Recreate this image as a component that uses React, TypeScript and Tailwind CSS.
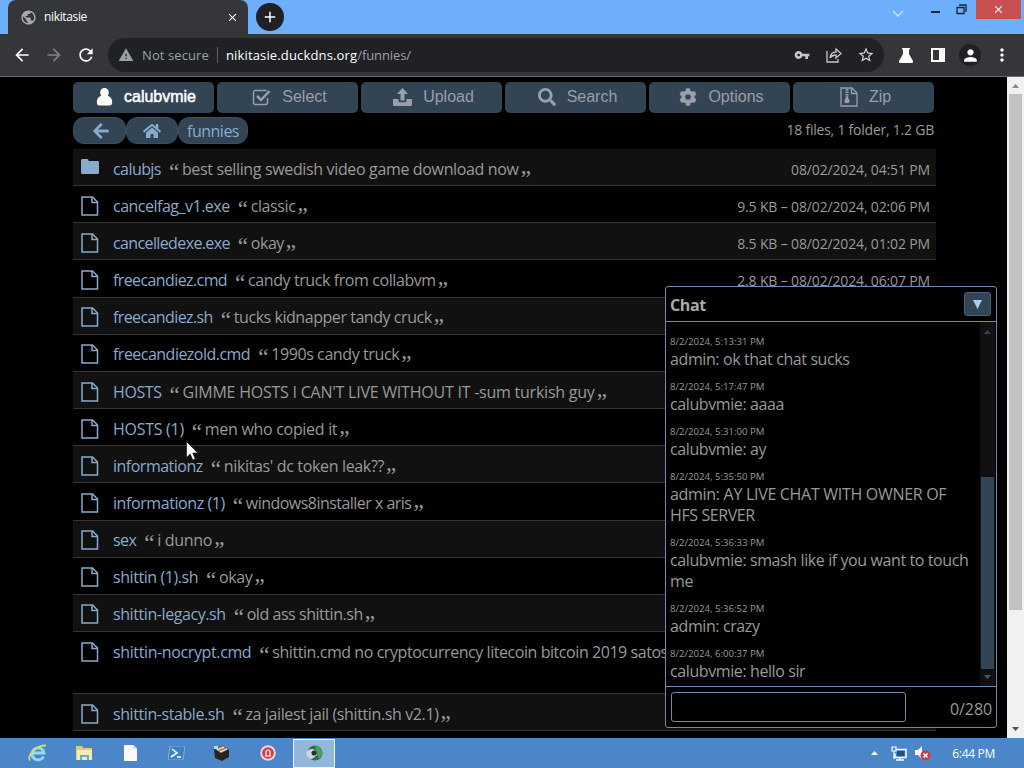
import type { ReactNode } from "react";
import { FaArrowLeft, FaCog, FaHome, FaSearch } from "react-icons/fa";
import {
  MdAdd,
  MdArrowBack,
  MdArrowForward,
  MdClose,
  MdMoreVert,
  MdPerson,
  MdPublic,
  MdRefresh,
  MdStarBorder,
  MdVpnKey,
  MdWarning,
} from "react-icons/md";

type Entry = {
  name: string;
  nameClass: string;
  comment: string;
  commentClass: string;
  meta?: string;
  folder?: boolean;
  tall?: boolean;
};

const entries: Entry[] = [
  { name: "calubjs", nameClass: "tracking-[-0.57px]", comment: "best selling swedish video game download now", commentClass: "tracking-[-0.35px]", meta: "08/02/2024, 04:51 PM", folder: true },
  { name: "cancelfag_v1.exe", nameClass: "tracking-[-0.5px]", comment: "classic", commentClass: "tracking-[-0.4px]", meta: "9.5 KB – 08/02/2024, 02:06 PM" },
  { name: "cancelledexe.exe", nameClass: "tracking-[-0.62px]", comment: "okay", commentClass: "tracking-[-0.5px]", meta: "8.5 KB – 08/02/2024, 01:02 PM" },
  { name: "freecandiez.cmd", nameClass: "tracking-[-0.6px]", comment: "candy truck from collabvm", commentClass: "tracking-[-0.41px]", meta: "2.8 KB – 08/02/2024, 06:07 PM" },
  { name: "freecandiez.sh", nameClass: "tracking-[-0.6px]", comment: "tucks kidnapper tandy cruck", commentClass: "tracking-[-0.45px]" },
  { name: "freecandiezold.cmd", nameClass: "tracking-[-0.52px]", comment: "1990s candy truck", commentClass: "tracking-[-0.4px]" },
  { name: "HOSTS", nameClass: "tracking-[-0.4px]", comment: "GIMME HOSTS I CAN'T LIVE WITHOUT IT -sum turkish guy", commentClass: "tracking-[-0.23px]" },
  { name: "HOSTS (1)", nameClass: "tracking-[-0.28px]", comment: "men who copied it", commentClass: "tracking-[-0.3px]" },
  { name: "informationz", nameClass: "tracking-[-0.5px]", comment: "nikitas' dc token leak??", commentClass: "tracking-[-0.35px]" },
  { name: "informationz (1)", nameClass: "tracking-[-0.42px]", comment: "windows8installer x aris", commentClass: "tracking-[-0.53px]" },
  { name: "sex", nameClass: "tracking-[-0.6px]", comment: "i dunno", commentClass: "tracking-[-0.3px]" },
  { name: "shittin (1).sh", nameClass: "tracking-[-0.43px]", comment: "okay", commentClass: "tracking-[-0.4px]" },
  { name: "shittin-legacy.sh", nameClass: "tracking-[-0.42px]", comment: "old ass shittin.sh", commentClass: "tracking-[-0.45px]" },
  { name: "shittin-nocrypt.cmd", nameClass: "tracking-[-0.38px]", comment: "shittin.cmd no cryptocurrency litecoin bitcoin 2019 satos", commentClass: "tracking-[-0.44px]", tall: true },
  { name: "shittin-stable.sh", nameClass: "tracking-[-0.42px]", comment: "za jailest jail (shittin.sh v2.1)", commentClass: "tracking-[-0.38px]" },
];

const messages = [
  { time: "8/2/2024, 5:13:31 PM", lines: ["admin: ok that chat sucks"] },
  { time: "8/2/2024, 5:17:47 PM", lines: ["calubvmie: aaaa"] },
  { time: "8/2/2024, 5:31:00 PM", lines: ["calubvmie: ay"] },
  { time: "8/2/2024, 5:35:50 PM", lines: ["admin: AY LIVE CHAT WITH OWNER OF", "HFS SERVER"] },
  { time: "8/2/2024, 5:36:33 PM", lines: ["calubvmie: smash like if you want to touch", "me"] },
  { time: "8/2/2024, 5:36:52 PM", lines: ["admin: crazy"] },
  { time: "8/2/2024, 6:00:37 PM", lines: ["calubvmie: hello sir"] },
];

function FileIcon() {
  return (
    <svg width="18" height="20" viewBox="0 0 18 20" fill="none" stroke="#88aacc" strokeWidth="1.5">
      <path d="M1 1h10.5L16.5 6v13H1z" />
      <path d="M11 1v5.5h5.5" />
    </svg>
  );
}

function FolderIcon() {
  return (
    <svg width="18" height="15" viewBox="0 0 19 15" preserveAspectRatio="none" fill="#88aacc">
      <path d="M0 1.5C0 .6.6 0 1.5 0h5C7.4 0 8 .6 8 1.5V2h9.5c.9 0 1.5.6 1.5 1.5v10c0 .9-.6 1.5-1.5 1.5h-16C.6 15 0 14.4 0 13.5z" />
    </svg>
  );
}

function UserIcon() {
  return (
    <svg width="17" height="18" viewBox="0 0 17 18" fill="#fff">
      <path d="M8.5 0C11 0 12.8 1.8 12.8 4.5c0 1.3-.4 2.300-1 3.200 2.800 1 4.400 3.200 4.400 6.300 0 2.300-1 3.600-2.600 3.600H3.400C1.800 17.600.8 16.300.8 14c0-3.100 1.600-5.300 4.400-6.300-.6-.9-1-1.900-1-3.200C4.200 1.800 6 0 8.500 0z" />
    </svg>
  );
}

function SelectIcon() {
  return (
    <svg width="19" height="18" viewBox="0 0 19 18" fill="none" stroke="#999fa6">
      <path d="M15.5 10v4.500a2 2 0 0 1-2 2h-10a2 2 0 0 1-2-2v-10a2 2 0 0 1 2-2h11" strokeWidth="1.5" />
      <path d="m5 8 4 4 8.5-9" strokeWidth="2.5" />
    </svg>
  );
}

function UploadIcon() {
  return (
    <svg width="19" height="18" viewBox="0 0 19 18" fill="#999fa6">
      <path d="M9.500 0 15 6h-3.500v6.500h-4V6H4z" />
      <path d="M0 11h5.500v1.500c0 1 .8 1.800 1.800 1.800h4.400c1 0 1.800-.8 1.800-1.800V11H19v5.500c0 .8-.7 1.500-1.500 1.500h-16C.7 18 0 17.300 0 16.500z" />
    </svg>
  );
}

function ZipIcon() {
  return (
    <svg width="18" height="20" viewBox="0 0 18 20" fill="none" stroke="#999fa6" strokeWidth="1.3">
      <path d="M1 1h11l5 5v13H1z" />
      <path d="M11.5 1v5.500H17" />
      <path d="M7 2v8" strokeWidth="3" strokeDasharray="1.5 1" />
      <path d="M7 9.500 5 14c-.4 2 4.400 2 4 0z" fill="#999fa6" />
    </svg>
  );
}

function ToolButton({ icon, label, active }: { icon: ReactNode; label: string; active?: boolean }) {
  return (
    <button
      className={
        active
          ? "flex h-[31px] w-[141px] items-center justify-center gap-[11px] rounded-[5px] bg-[#334455] pb-px pl-[5px] font-['Liberation_Sans',sans-serif] text-base text-white [-webkit-text-stroke:0.5px_#fff]"
          : "flex h-[31px] w-[141px] items-center justify-center gap-[11px] rounded-[5px] bg-[#334455] pb-px pl-1 font-['Liberation_Sans',sans-serif] text-base text-[#999fa6]"
      }
    >
      {icon}
      {label}
    </button>
  );
}

function Browser() {
  return (
    <header className="shrink-0">
      <div className="flex h-[34px] bg-[#6eaffb]">
        <div className="ml-2 flex w-60 items-center rounded-t-lg bg-[#35363a] pl-3 text-white">
          <MdPublic size={17} className="text-[#aaabae]" />
          <span className="ml-[7px] flex-1 text-xs font-medium tracking-[-0.35px]">nikitasie</span>
          <MdClose size={13} className="mr-[9px]" />
        </div>
        <div className="mt-[3px] ml-2 grid size-7 place-items-center rounded-full bg-[#202124] text-white">
          <MdAdd size={18} />
        </div>
        <div className="ml-auto flex h-[19px] items-center">
          <svg width="12" height="8" viewBox="0 0 12 8" className="mt-2 mr-[27px]" fill="none" stroke="#c8e2ff" strokeWidth="1.5">
            <path d="m1 1 5 5 5-5" />
          </svg>
          <div className="mt-[5px] mr-4 h-[2px] w-[9px] bg-[#10253e]" />
          <svg width="11" height="11" viewBox="0 0 11 11" className="mr-[9px]" fill="none" stroke="#10253e" strokeWidth="1.3">
            <path d="M1 3.500h7v6H1zM3 1h7v7" />
          </svg>
          <div className="mr-[3px] grid h-[19px] w-[45px] place-items-center bg-[#c75050] text-white">
            <MdClose size={13} />
          </div>
        </div>
      </div>
      <div className="flex h-[43px] items-center border-b border-[#6b6c70] bg-[#35363a] pl-3 text-white">
        <MdArrowBack size={20} />
        <MdArrowForward size={20} className="ml-3 text-[#808184]" />
        <MdRefresh size={20} className="ml-3" />
        <div className="ml-3 flex h-[34px] w-[776px] items-center rounded-full bg-[#202124] pl-2.5 text-[13px]">
          <MdWarning size={16} className="text-[#9aa0a6]" />
          <span className="ml-2 pt-px tracking-[0.1px] text-[#9aa0a6]">Not secure</span>
          <span className="mx-[8px] h-4 w-px bg-[#5f6368]" />
          <span className="pt-px tracking-[0.15px]">
            nikitasie.duckdns.org<span className="tracking-[-0.1px] text-[#9aa0a6]">/funnies/</span>
          </span>
          <MdVpnKey size={16} className="ml-auto text-[#c4c7ca]" />
          <svg width="16" height="16" viewBox="0 0 16 16" className="ml-4 text-[#c4c7ca]" fill="none" stroke="currentColor" strokeWidth="1.3">
            <path d="M1 4v11h11v-3" />
            <path d="M4 11c.5-4 2.500-6 6-6V2l5 4.500-5 4.500V8c-2.500 0-4.500.8-6 3z" />
          </svg>
          <MdStarBorder size={18} className="mr-[9px] ml-[15px] text-[#d4d6d8]" />
        </div>
        <svg width="14" height="15" viewBox="0 0 14 15" className="ml-[15px]" fill="#fff">
          <path d="M3 0h8v1.500h-1V6l4 7c.4 1-.1 2-1.200 2H1.200C.1 15-.4 14 0 13l4-7V1.500H3z" />
        </svg>
        <svg width="14" height="14" viewBox="0 0 14 14" className="ml-[18px]">
          <path d="M0 0h14v14H0zM2 2v10h6V2z" fill="#fff" fillRule="evenodd" />
        </svg>
        <div className="ml-[14px] grid size-[22px] place-items-center rounded-full bg-[#202124]">
          <MdPerson size={19} />
        </div>
        <MdMoreVert size={20} className="ml-[11px]" />
      </div>
    </header>
  );
}

function Chat() {
  return (
    <section className="absolute top-[209px] left-[665px] flex h-[442px] w-[332px] flex-col rounded-[3px] border border-[#7788aa] bg-black text-[#999]">
      <div className="flex h-[35px] shrink-0 items-center justify-between border-b border-[#7788aa] pr-[5px] pl-1">
        <h2 className="pt-0.5 text-base font-bold tracking-[-0.4px] text-[#aaa]">Chat</h2>
        <button className="grid h-6 w-[27px] place-items-center rounded-[3px] border border-[#48607a] bg-[#334455]">
          <svg width="9" height="9" viewBox="0 0 9 9" fill="#aaccee">
            <path d="M0 0h9L4.500 9z" />
          </svg>
        </button>
      </div>
      <div className="flex min-h-0 flex-1">
        <div className="flex min-w-0 flex-1 flex-col gap-2.5 pt-[13px] pl-1">
          {messages.map((m) => (
            <div key={m.time}>
              <div className="h-[14px] text-[9.6px] leading-[14px]">{m.time}</div>
              {m.lines.map((line) => (
                <div
                  key={line}
                  className={
                    line.includes("LIVE")
                      ? "h-[21px] text-base leading-[21px] tracking-[-0.3px] whitespace-nowrap"
                      : "h-[21px] text-base leading-[21px] tracking-[-0.4px] whitespace-nowrap"
                  }
                >
                  {line}
                </div>
              ))}
            </div>
          ))}
        </div>
        <div className="mr-px flex w-[15px] shrink-0 flex-col items-center bg-[#111]">
          <svg width="7" height="4" viewBox="0 0 7 4" className="mt-2" fill="#334455">
            <path d="M0 4 3.500 0 7 4z" />
          </svg>
          <div className="mt-[143px] h-[192px] w-[13px] shrink-0 bg-[#334455]" />
          <svg width="7" height="4" viewBox="0 0 7 4" className="mt-1.5" fill="#445566">
            <path d="M0 0h7L3.500 4z" />
          </svg>
        </div>
      </div>
      <div className="flex h-[41px] shrink-0 items-center justify-between border-t border-[#7788aa] px-1">
        <div className="ml-px h-[30px] w-[235px] rounded-[3px] border border-[#7788aa]" />
        <span className="pt-[3px] text-base tracking-[-0.1px]">0/280</span>
      </div>
    </section>
  );
}

function Row({ entry }: { entry: Entry }) {
  return (
    <li
      className={
        entry.tall
          ? "flex h-[62px] border-b border-[#333] pt-[8.6px]"
          : "flex h-[37.17px] border-b border-[#333] pt-[8.6px] odd:bg-[#111]"
      }
    >
      <span className="w-10 shrink-0 pt-px pl-2">{entry.folder ? <FolderIcon /> : <FileIcon />}</span>
      <span className={`text-base leading-[23px] whitespace-nowrap text-[#88aacc] ${entry.nameClass}`}>{entry.name}</span>
      <span className={`ml-2 text-base leading-[23px] whitespace-nowrap text-[#999] ${entry.commentClass}`}>
        <span className="mr-[2px] inline-block w-[11px] align-[-5px] font-['Liberation_Serif',serif] text-[23px] leading-[0] tracking-normal">“</span>
        {entry.comment}
        {!entry.tall && (
          <span className="ml-[2px] inline-block w-[11px] align-[-11px] font-['Liberation_Serif',serif] text-[23px] leading-[0] tracking-normal">”</span>
        )}
      </span>
      {entry.meta && (
        <span className="mr-1.5 ml-auto text-[14px] leading-6 tracking-[-0.15px] whitespace-nowrap text-[#999]">{entry.meta}</span>
      )}
    </li>
  );
}

function Listing() {
  return (
    <main className="relative flex h-[661px] shrink-0 overflow-hidden bg-black">
      <div className="ml-[73px] w-[863px] pt-[5px]">
        <nav className="flex gap-[3px]">
          <ToolButton active icon={<UserIcon />} label="calubvmie" />
          <ToolButton icon={<SelectIcon />} label="Select" />
          <ToolButton icon={<UploadIcon />} label="Upload" />
          <ToolButton icon={<FaSearch size={18} />} label="Search" />
          <ToolButton icon={<FaCog size={18} />} label="Options" />
          <ToolButton icon={<ZipIcon />} label="Zip" />
        </nav>
        <div className="mt-1 flex h-[27px] items-center">
          <span className="grid h-[27px] w-[53px] place-items-center rounded-[11px] border border-[#3c4e60] bg-[#334455] pl-0.5 text-[#88aacc]">
            <FaArrowLeft size={18} />
          </span>
          <span className="grid h-[27px] w-[52px] place-items-center rounded-[11px] border border-[#3c4e60] bg-[#334455] text-[#88aacc]">
            <FaHome size={18} />
          </span>
          <span className="grid h-[27px] w-[70px] place-items-center rounded-[11px] border border-[#3c4e60] bg-[#334455] pt-px text-base leading-6 tracking-[-0.5px] text-[#88aacc]">
            funnies
          </span>
          <span className="mr-0.5 ml-auto pb-0.5 text-[14px] tracking-[-0.23px] text-[#999]">18 files, 1 folder, 1.2 GB</span>
        </div>
        <ul className="mt-[5px]">
          {entries.map((entry) => (
            <Row key={entry.name} entry={entry} />
          ))}
        </ul>
      </div>
      <div className="ml-auto flex w-[17px] flex-col items-center bg-[#f1f1f1]">
        <svg width="7" height="4" viewBox="0 0 7 4" className="mt-[7px]" fill="#8a8a8a">
          <path d="M0 4 3.500 0 7 4z" />
        </svg>
        <div className="mt-1.5 h-[516px] w-[13px] bg-[#c1c1c1]" />
        <svg width="7" height="4" viewBox="0 0 7 4" className="mt-auto mb-[7px]" fill="#505050">
          <path d="M0 0h7L3.500 4z" />
        </svg>
      </div>
      <Chat />
      <svg width="13" height="20" viewBox="0 0 13 20" className="absolute top-[364px] left-[186px]">
        <path d="M.5.5v16l3.700-3.500 2.500 6 2.600-1-2.500-6h5z" fill="#fff" stroke="#000" strokeWidth=".6" />
      </svg>
    </main>
  );
}

function Taskbar() {
  return (
    <footer className="flex h-[30px] shrink-0 items-center bg-[#4a86c8]">
      <svg width="20" height="18" viewBox="0 0 20 18" className="ml-7" fill="none">
        <path d="M15.500 12.500A6 6 0 1 1 16 9H5" stroke="#8fdcfb" strokeWidth="2.8" />
        <path d="M2 16.500C-1 12 8 1 18 1.500" stroke="#dcdc5c" strokeWidth="1.8" />
      </svg>
      <svg width="17" height="16" viewBox="0 0 17 16" className="ml-[28px]">
        <path d="M0 1h6l1.500 2H16v12H0z" fill="#e3c97a" />
        <path d="M1 5h15v10H1z" fill="#f7e9b4" />
        <path d="M4 15v-5h9v5h-2v-3H6v3z" fill="#6aaec9" />
      </svg>
      <svg width="13" height="16" viewBox="0 0 13 16" className="ml-[31px]">
        <path d="M0 0h9.500L13 3.500V16H0z" fill="#f8fafc" />
        <path d="M9.500 0v3.500H13" fill="#c8d4e0" />
      </svg>
      <svg width="17" height="14" viewBox="0 0 17 14" className="ml-[31px]">
        <path d="M2 0h15l-2 14H0z" fill="#3f82c0" stroke="#8dbbe3" strokeWidth=".8" />
        <path d="m4 3 5 4-6 4M9 11h4" fill="none" stroke="#fff" strokeWidth="1.6" />
      </svg>
      <svg width="15" height="16" viewBox="0 0 15 16" className="ml-[29px]">
        <path d="M0 4 8 1l7 4v7l-7 4-7-3z" fill="#29241f" />
        <path d="m1 4 7-3 6 3.500L7 8z" fill="#bb8550" />
        <path d="m3 5 7-3M6 7l7-3" stroke="#fff" />
        <path d="M0 1h4v3H0z" fill="#a7e0f5" />
      </svg>
      <svg width="16" height="16" viewBox="0 0 16 16" className="ml-[31px]">
        <circle cx="8" cy="8" r="7.8" fill="#e9d4d8" />
        <circle cx="8" cy="8" r="5.8" fill="#d33b42" />
        <path d="M6 11V7a2 2 0 0 1 4 0v4M5 11h6" fill="none" stroke="#fff" strokeWidth="1.2" />
      </svg>
      <div className="ml-[17px] grid h-[29px] w-[42px] place-items-center border border-white/90 bg-[#93b7db]">
        <svg width="17" height="16" viewBox="0 0 17 16">
          <circle cx="9" cy="8" r="7.5" fill="#3c6559" />
          <path d="M9 .5a7.500 7.500 0 0 1 4 13.500L11 8z" fill="#4da25a" />
          <path d="M0 8c2-4 6-5 9-3l2 5-5 4c-3 0-5-2-6-6z" fill="#cbd7df" />
          <circle cx="8" cy="8" r="2.5" fill="#1d3241" />
        </svg>
      </div>
      <svg width="7" height="4" viewBox="0 0 7 4" className="ml-auto" fill="#fff">
        <path d="M0 4 3.500 0 7 4z" />
      </svg>
      <svg width="16" height="15" viewBox="0 0 16 15" className="ml-[13px]" fill="none">
        <path d="M5 3.500h10v8H4v-4M9 11v3M5 14h8" stroke="#fff" strokeWidth="1.5" />
        <path d="M1 1h4v4H1zM3 5v8" stroke="#fff" strokeWidth="1.2" />
        <path d="M6 5h7.500v5H6z" fill="#244e7c" />
      </svg>
      <svg width="17" height="16" viewBox="0 0 17 16" className="ml-[7px]">
        <path d="M1 5h3l4-4v13l-4-4H1z" fill="#fff" />
        <circle cx="11.5" cy="10.5" r="5" fill="#cf3b40" />
        <path d="m9.500 8.500 4 4m0-4-4 4" stroke="#fff" strokeWidth="1.5" />
      </svg>
      <span className="mr-[29px] ml-[21px] pt-px text-xs tracking-[-0.3px] text-white">6:44 PM</span>
    </footer>
  );
}

export default function App() {
  return (
    <div className="flex h-[768px] w-[1024px] flex-col overflow-hidden bg-black font-['Open_Sans','Noto_Sans',sans-serif]">
      <Browser />
      <Listing />
      <Taskbar />
    </div>
  );
}
